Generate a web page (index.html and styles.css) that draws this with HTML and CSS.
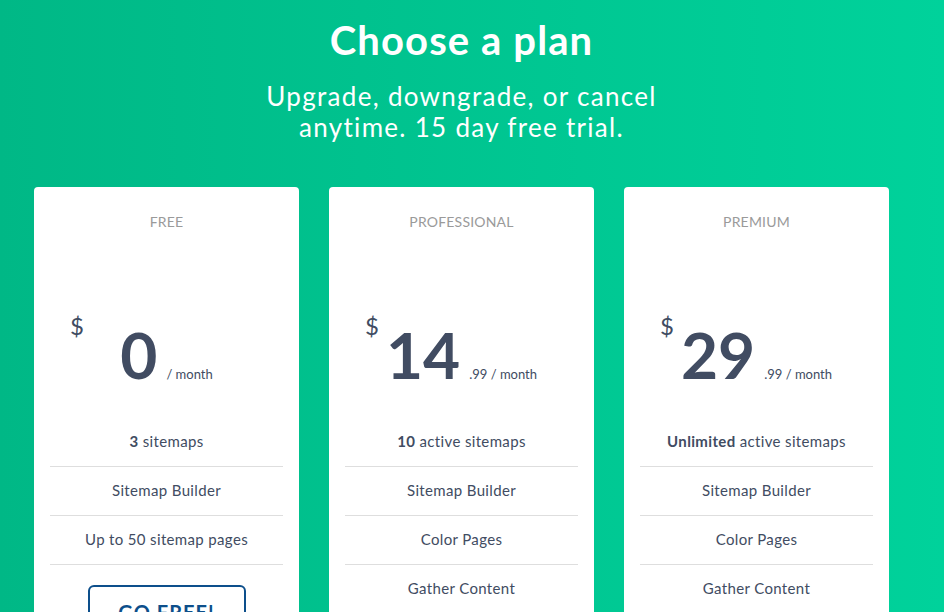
FILE: index.html
```html
<!DOCTYPE html>
<html lang="en">
<head>
<meta charset="utf-8">
<title>Choose a plan</title>
<link rel="stylesheet" href="styles.css">
</head>
<body>
<main class="page">
  <header class="hero">
    <h1 class="hero-title">Choose a plan</h1>
    <p class="hero-sub">Upgrade, downgrade, or cancel anytime. 15 day free trial.</p>
  </header>
  <section class="plans">
    <article class="card">
      <h2 class="card-name">FREE</h2>
      <div class="price">
        <span class="currency">$</span>
        <div class="amount"><span class="num">0</span><span class="per">/ month</span></div>
      </div>
      <ul class="features">
        <li><b>3</b> sitemaps</li>
        <li>Sitemap Builder</li>
        <li>Up to 50 sitemap pages</li>
      </ul>
      <button class="btn">GO FREE!</button>
    </article>
    <article class="card">
      <h2 class="card-name">PROFESSIONAL</h2>
      <div class="price">
        <span class="currency">$</span>
        <div class="amount"><span class="num">14</span><span class="per">.99 / month</span></div>
      </div>
      <ul class="features">
        <li><b>10</b> active sitemaps</li>
        <li>Sitemap Builder</li>
        <li>Color Pages</li>
        <li>Gather Content</li>
      </ul>
    </article>
    <article class="card">
      <h2 class="card-name">PREMIUM</h2>
      <div class="price">
        <span class="currency">$</span>
        <div class="amount"><span class="num">29</span><span class="per">.99 / month</span></div>
      </div>
      <ul class="features">
        <li><b>Unlimited</b> active sitemaps</li>
        <li>Sitemap Builder</li>
        <li>Color Pages</li>
        <li>Gather Content</li>
      </ul>
    </article>
  </section>
</main>
</body>
</html>
```
FILE: styles.css
```css
* { box-sizing: border-box; }
html, body { margin: 0; height: 100%; }
body {
  font-family: Lato, "Open Sans", sans-serif;
  background: linear-gradient(to right, #00b886, #00d29b);
  overflow: hidden;
}
.page {
  width: 855px;
  margin-left: 34px;
}
.hero {
  text-align: center;
  color: #fff;
  padding-top: 16px;
}
.hero-title {
  margin: 0;
  font-size: 40px;
  line-height: 48px;
  font-weight: 700;
  letter-spacing: 1.1px;
}
.hero-sub {
  margin: 17px auto 0;
  max-width: 440px;
  font-size: 26px;
  line-height: 31px;
  font-weight: 400;
  letter-spacing: 1.3px;
}
.plans {
  margin-top: 44px;
  display: grid;
  grid-template-columns: repeat(3, 265px);
  gap: 30px;
}
.card {
  background: #fff;
  border-radius: 4px;
  padding: 26px 16px 40px;
  min-height: 480px;
  display: flex;
  flex-direction: column;
  align-items: stretch;
}
.card-name {
  margin: 0;
  text-align: center;
  font-size: 14px;
  line-height: 18px;
  font-weight: 400;
  color: #9a9a9a;
  letter-spacing: 0.2px;
}
.price {
  margin-top: 83px;
  display: grid;
  grid-template-columns: 1fr auto 1fr;
  align-items: start;
  color: #414c62;
}
.currency {
  grid-column: 1;
  justify-self: start;
  padding-left: 20px;
  font-size: 24px;
  line-height: 24px;
}
.amount {
  grid-column: 2;
  display: flex;
  align-items: baseline;
  gap: 9px;
  margin-top: 9px;
}
.num {
  font-size: 64px;
  line-height: 64px;
  font-weight: 700;
}
.per {
  font-size: 13px;
}
.features {
  list-style: none;
  margin: 30px 0 0;
  padding: 0;
}
.features li {
  text-align: center;
  font-size: 15px;
  line-height: 20px;
  padding: 14px 0 15px;
  color: #414c62;
  letter-spacing: 0.35px;
  border-bottom: 1px solid #dedede;
}
.features li + li { padding-top: 13px; }
.features b { font-weight: 700; }
.btn {
  align-self: center;
  margin-top: 20px;
  width: 158px;
  padding: 13px 0;
  background: #fff;
  border: 2px solid #0d4f8b;
  border-radius: 6px;
  color: #0d4f8b;
  font-family: Lato, sans-serif;
  font-size: 20px;
  font-weight: 700;
  letter-spacing: 1px;
}
```
